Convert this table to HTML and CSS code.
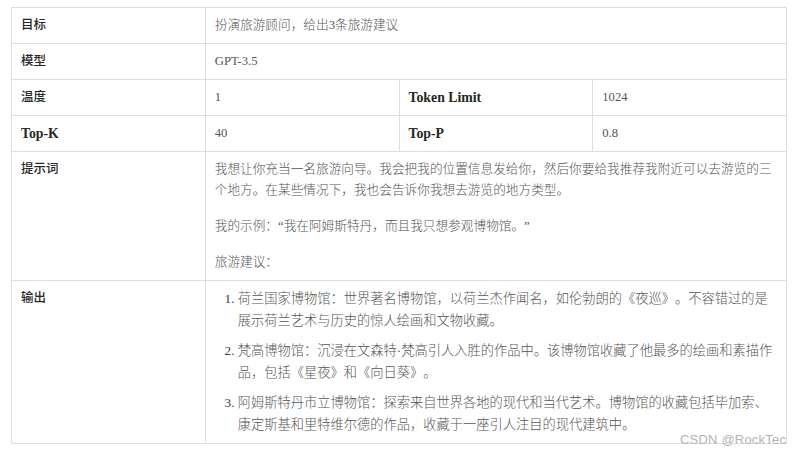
FILE: index.html
```html
<!DOCTYPE html>
<html lang="zh-CN">
<head>
<meta charset="utf-8">
<title>旅游顾问</title>
<link rel="stylesheet" href="styles.css">
</head>
<body>
<table class="spec">
  <colgroup><col><col><col><col></colgroup>
  <tr>
    <th class="zh">目标</th>
    <td colspan="3" class="zh">扮演旅游顾问，给出3条旅游建议</td>
  </tr>
  <tr>
    <th class="zh">模型</th>
    <td colspan="3">GPT-3.5</td>
  </tr>
  <tr>
    <th class="zh">温度</th>
    <td>1</td>
    <th class="en">Token Limit</th>
    <td>1024</td>
  </tr>
  <tr>
    <th class="en">Top-K</th>
    <td>40</td>
    <th class="en">Top-P</th>
    <td>0.8</td>
  </tr>
  <tr class="prompt">
    <th class="zh">提示词</th>
    <td colspan="3" class="zh">
      <p>我想让你充当一名旅游向导。我会把我的位置信息发给你，然后你要给我推荐我附近可以去游览的三个地方。在某些情况下，我也会告诉你我想去游览的地方类型。</p>
      <p>我的示例：“我在阿姆斯特丹，而且我只想参观博物馆。”</p>
      <p>旅游建议：</p>
    </td>
  </tr>
  <tr class="output">
    <th class="zh">输出</th>
    <td colspan="3" class="zh">
      <ol>
        <li>荷兰国家博物馆：世界著名博物馆，以荷兰杰作闻名，如伦勃朗的《夜巡》。不容错过的是展示荷兰艺术与历史的惊人绘画和文物收藏。</li>
        <li>梵高博物馆：沉浸在文森特·梵高引人入胜的作品中。该博物馆收藏了他最多的绘画和素描作品，包括《星夜》和《向日葵》。</li>
        <li>阿姆斯特丹市立博物馆：探索来自世界各地的现代和当代艺术。博物馆的收藏包括毕加索、康定斯基和里特维尔德的作品，收藏于一座引人注目的现代建筑中。</li>
      </ol>
    </td>
  </tr>
</table>
<div class="watermark">CSDN @RockTec</div>
</body>
</html>
```

FILE: styles.css
```css
html, body {
  margin: 0;
  padding: 0;
  background: #ffffff;
}

body {
  position: relative;
  width: 803px;
  height: 455px;
  overflow: hidden;
  font-family: "Liberation Serif", "Noto Sans CJK SC", serif;
  text-spacing-trim: space-all;
}

.spec {
  margin: 7px 0 0 11px;
  width: 776px;
  border-collapse: collapse;
  table-layout: fixed;
}

.spec th,
.spec td {
  border: 1px solid #dedede;
  padding: 7px 9px;
  text-align: left;
  vertical-align: top;
  line-height: 21px;
}

.spec th {
  color: #262626;
}

.spec th.zh {
  font-size: 12.5px;
  font-weight: 500;
}

.spec th.en {
  font-size: 13.8px;
  font-weight: 700;
}

.spec td {
  font-size: 12.66px;
  color: #555555;
}

.spec td.zh {
  font-weight: 300;
}

.prompt p {
  margin: 0;
}

.prompt p + p {
  margin-top: 15px;
}

.output td {
  font-size: 13.25px;
  line-height: 22px;
}

.output ol {
  margin: 0;
  padding-left: 23px;
}

.output li + li {
  margin-top: 8px;
}

.output li::marker {
  color: #3a3a4a;
  font-weight: 400;
}

.watermark {
  position: absolute;
  left: 680px;
  top: 435px;
  font-family: "Liberation Sans", sans-serif;
  font-size: 13px;
  line-height: 10px;
  color: #b4b4b4;
  letter-spacing: 0.2px;
  white-space: nowrap;
}
```
